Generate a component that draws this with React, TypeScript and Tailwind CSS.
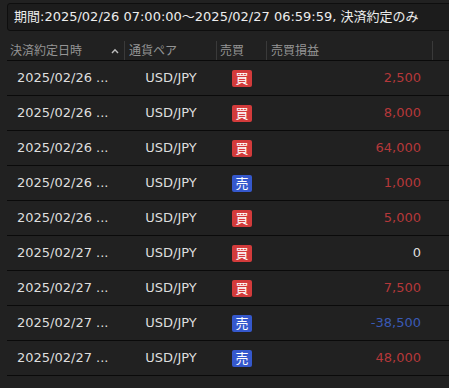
import { FC } from "react";

type Trade = {
	date: string;
	pair: string;
	side: "buy" | "sell";
	pnl: string;
	tone: "red" | "blue" | "plain";
};

const trades: Trade[] = [
	{ date: "2025/02/26 ...", pair: "USD/JPY", side: "buy", pnl: "2,500", tone: "red" },
	{ date: "2025/02/26 ...", pair: "USD/JPY", side: "buy", pnl: "8,000", tone: "red" },
	{ date: "2025/02/26 ...", pair: "USD/JPY", side: "buy", pnl: "64,000", tone: "red" },
	{ date: "2025/02/26 ...", pair: "USD/JPY", side: "sell", pnl: "1,000", tone: "red" },
	{ date: "2025/02/26 ...", pair: "USD/JPY", side: "buy", pnl: "5,000", tone: "red" },
	{ date: "2025/02/27 ...", pair: "USD/JPY", side: "buy", pnl: "0", tone: "plain" },
	{ date: "2025/02/27 ...", pair: "USD/JPY", side: "buy", pnl: "7,500", tone: "red" },
	{ date: "2025/02/27 ...", pair: "USD/JPY", side: "sell", pnl: "-38,500", tone: "blue" },
	{ date: "2025/02/27 ...", pair: "USD/JPY", side: "sell", pnl: "48,000", tone: "red" },
];

const toneClass = {
	red: "text-[#b5383a]",
	blue: "text-[#3a5ab5]",
	plain: "text-[#dedede]",
};

const SideBadge: FC<{ side: Trade["side"] }> = ({ side }) => (
	<span
		className={`flex items-center justify-center w-[20px] h-[17px] rounded-[2px] text-[13px] leading-none text-white ${
			side === "buy" ? "bg-[#d33b3b]" : "bg-[#3558cc]"
		}`}
	>
		{side === "buy" ? "買" : "売"}
	</span>
);

const App: FC = () => {
	return (
		<div
			className="w-[449px] h-[388px] overflow-hidden bg-[#212121] pt-[3px] pl-[7px]"
			style={{ fontFamily: '"DejaVu Sans", "Noto Sans CJK JP", sans-serif' }}
		>
			<div className="w-[460px] h-[28px] flex items-center pl-[6px] border border-[#0e0e0e] rounded-[3px] bg-[#1c1c1c] text-[13px] text-[#ececec] whitespace-nowrap">
				期間:2025/02/26 07:00:00～2025/02/27 06:59:59, 決済約定のみ
			</div>

			<div className="mt-[6px] w-[460px]">
				<div className="flex h-[24px] pt-[4px] border-b border-[#0a0a0a] text-[12px] text-[#959595]">
					<div className="w-[118px] flex items-center justify-between pl-[3px] pr-[5px] border-r border-[#3a3a3a]">
						<span>決済約定日時</span>
						<svg width="8" height="6" viewBox="0 0 8 6" fill="none" stroke="#bdbdbd" strokeWidth="1.4">
							<path d="M1 5 L4 1.8 L7 5" />
						</svg>
					</div>
					<div className="w-[92px] flex items-center pl-[4px] border-r border-[#3a3a3a]">通貨ペア</div>
					<div className="w-[50px] flex items-center pl-[3px] border-r border-[#3a3a3a]">売買</div>
					<div className="w-[166px] flex items-center pl-[4px] border-r border-[#3a3a3a]">売買損益</div>
					<div className="flex-1" />
				</div>

				{trades.map((t, i) => (
					<div key={i} className="flex h-[35px] border-b border-[#0a0a0a] text-[13px]">
						<div className="w-[118px] flex items-center pl-[10px] text-[#dedede] whitespace-nowrap">{t.date}</div>
						<div className="w-[92px] flex items-center justify-center text-[#dedede]">{t.pair}</div>
						<div className="w-[50px] flex items-center justify-center">
							<SideBadge side={t.side} />
						</div>
						<div className={`w-[166px] flex items-center justify-end pr-[12px] ${toneClass[t.tone]}`}>{t.pnl}</div>
						<div className="flex-1" />
					</div>
				))}
			</div>
		</div>
	);
};

export default App;
